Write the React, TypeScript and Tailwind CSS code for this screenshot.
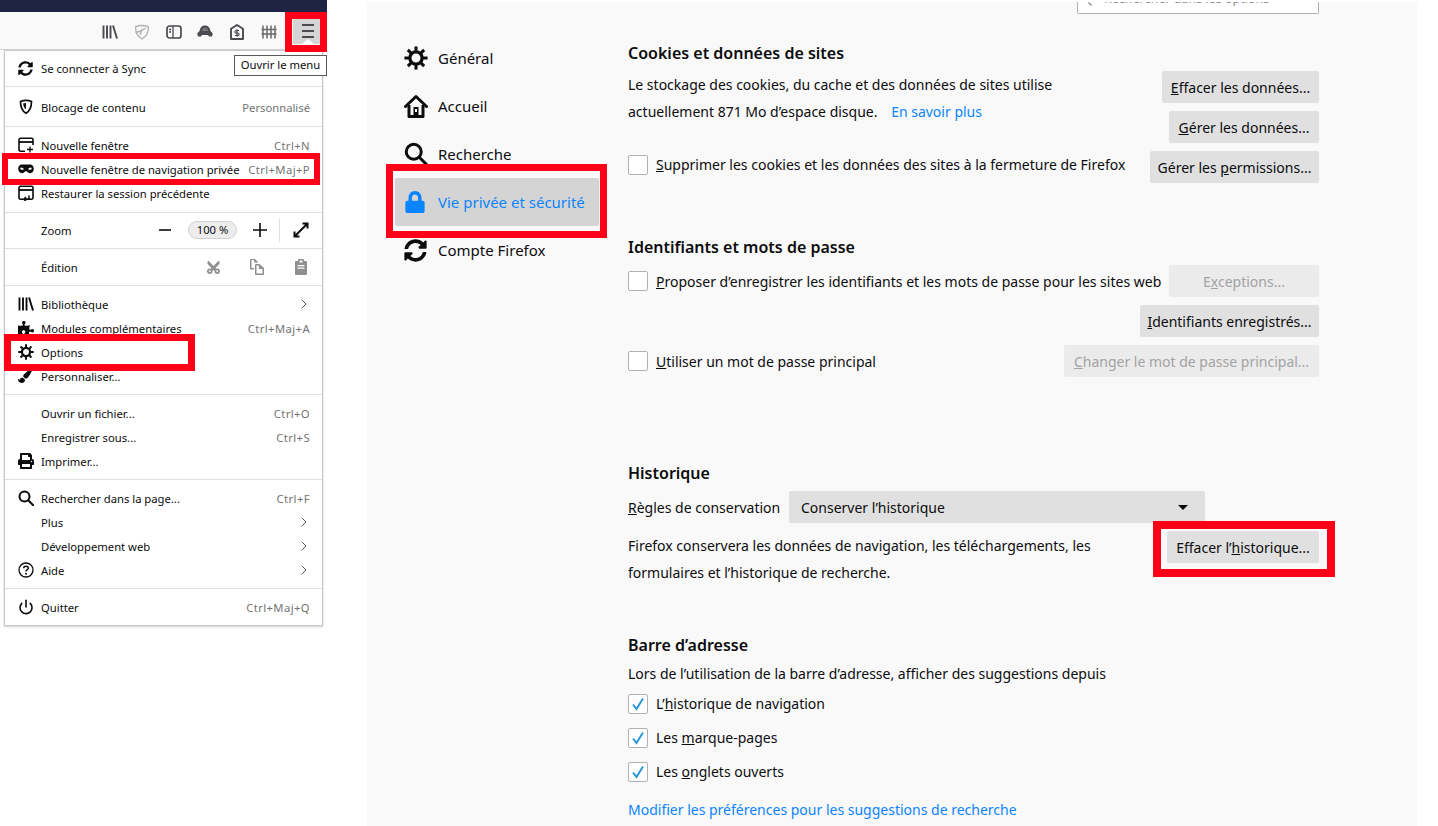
import type { ReactNode } from "react"
import { FaPrint, FaPuzzlePiece, FaSyncAlt, FaCut, FaPaintBrush, FaLock } from "react-icons/fa"
import { ChevronRight, Power } from "lucide-react"

function Gear({ size = 16 }: { size?: number }) {
  const angles = [0, 45, 90, 135, 180, 225, 270, 315]
  return (
    <svg width={size} height={size} viewBox="0 0 16 16">
      <circle cx="8" cy="8" r="4.100" fill="none" stroke="#0c0c0d" strokeWidth="2.200" />
      {angles.map((a) => (
        <rect key={a} x="7" y="0.300" width="2" height="3.600" fill="#0c0c0d" transform={`rotate(${a} 8 8)`} />
      ))}
    </svg>
  )
}

function SearchIcon({ size = 16 }: { size?: number }) {
  return (
    <svg width={size} height={size} viewBox="0 0 16 16" fill="none" stroke="#0c0c0d" strokeWidth="2">
      <circle cx="6.500" cy="6.500" r="5" />
      <path d="M10.200 10.200 15.200 15.200" strokeLinecap="round" />
    </svg>
  )
}

function Home() {
  return (
    <svg width="24" height="24" viewBox="0 0 24 24" fill="none" stroke="#0c0c0d" strokeWidth="3" strokeLinejoin="round">
      <path d="M1.500 12.500 12 2.500l10.500 10" strokeLinecap="round" />
      <path d="M5 11v11.500h14V11" />
      <rect x="9.500" y="13" width="5" height="9" fill="#0c0c0d" stroke="none" />
      <rect x="11" y="15" width="2" height="3" fill="#f9f9fa" stroke="none" />
    </svg>
  )
}

function Library({ color = "#0c0c0d" }: { color?: string }) {
  return (
    <svg width="16" height="16" viewBox="0 0 16 16" fill="none" stroke={color} strokeWidth="1.900">
      <path d="M1.500 1.500v13M5 1.500v13M8.500 1.500v13M11 1.500l4 13" />
    </svg>
  )
}

function Mask() {
  return (
    <svg width="16" height="16" viewBox="0 0 16 16">
      <path fillRule="evenodd" fill="#0c0c0d" d="M4 3.500h8c2.400 0 3.800 1.800 3.800 4.300 0 2.700-1.600 4.400-3.800 4.400-1.900 0-2.600-2-4-2s-2.100 2-4 2C1.800 12.200.2 10.500.2 7.800.2 5.300 1.600 3.500 4 3.500ZM3.200 6.500c-.9 0-1.200 1-.6 1.700.8.800 2.500.9 3 .2.500-.8-1-1.900-2.400-1.900Zm9.600 0c-1.400 0-2.900 1.100-2.400 1.900.5.700 2.200.6 3-.2.600-.7.300-1.700-.6-1.700Z" />
    </svg>
  )
}

function NewWindow() {
  return (
    <svg width="16" height="16" viewBox="0 0 16 16" fill="none" stroke="#0c0c0d" strokeWidth="1.600">
      <path d="M7 14.200H2.500a1.500 1.500 0 0 1-1.500-1.500V2.800a1.500 1.500 0 0 1 1.500-1.500h11a1.500 1.500 0 0 1 1.500 1.500V8" />
      <path d="M1 5h14" strokeWidth="1.800" />
      <path d="M12 9.500v6M9 12.500h6" strokeWidth="1.300" />
    </svg>
  )
}

function Restore() {
  return (
    <svg width="16" height="16" viewBox="0 0 16 16" fill="none" stroke="#0c0c0d" strokeWidth="1.600">
      <path d="M5 14.200H2.500a1.500 1.500 0 0 1-1.500-1.500V2.800a1.500 1.500 0 0 1 1.500-1.500h11a1.500 1.500 0 0 1 1.500 1.500v9.900a1.500 1.500 0 0 1-1.500 1.500H8" />
      <path d="M1 5h14" strokeWidth="1.800" />
      <path d="M11 10.500v3.700H6M8 12l-2.300 2.200L8 16.200" strokeWidth="1.500" />
    </svg>
  )
}

function ShieldMenu() {
  return (
    <svg width="16" height="16" viewBox="0 0 16 16">
      <path fill="none" stroke="#0c0c0d" strokeWidth="1.700" d="M8 1.300c1.900 0 3.800.4 5.500 1.200 0 5.500-1.200 9.300-5.500 11.800C3.700 11.800 2.500 8 2.500 2.500 4.200 1.700 6.100 1.300 8 1.300Z" />
      <path fill="#0c0c0d" d="M8 4c-1 0-2 .2-2.800.5.100 2.800.9 4.600 2.800 6Z" />
    </svg>
  )
}

function Help() {
  return (
    <svg width="16" height="16" viewBox="0 0 16 16" fill="none" stroke="#0c0c0d" strokeWidth="1.300">
      <circle cx="8" cy="8" r="7" />
      <path d="M5.700 6.200C5.800 4.900 6.800 4.200 8 4.200c1.300 0 2.300.8 2.300 1.900 0 1.800-2.300 1.800-2.300 3.500" strokeWidth="1.500" />
      <circle cx="8" cy="11.700" r="1" fill="#0c0c0d" stroke="none" />
    </svg>
  )
}

function Copy() {
  return (
    <svg width="16" height="16" viewBox="0 0 16 16" fill="#8f8f90">
      <path fillRule="evenodd" d="M2 0h4l2.500 2.500V4H7.500V3.500H5V1H2.500v8H5v1.500H2A1 1 0 0 1 1 9.500V1a1 1 0 0 1 1-1Z" />
      <path fillRule="evenodd" d="M7 5h3.500L15 9v6a1 1 0 0 1-1 1H7a1 1 0 0 1-1-1V6a1 1 0 0 1 1-1Zm.5 1.500v8h6V10H10V6.500Z" />
    </svg>
  )
}

function Paste() {
  return (
    <svg width="16" height="16" viewBox="0 0 16 16" fill="#8f8f90">
      <path fillRule="evenodd" d="M6 0h4a1 1 0 0 1 1 1v1h2a1 1 0 0 1 1 1v12a1 1 0 0 1-1 1H3a1 1 0 0 1-1-1V3a1 1 0 0 1 1-1h2V1a1 1 0 0 1 1-1Zm.5 1.500V3.500h3V1.500ZM4.500 6v1.200h7V6Zm0 2.500v1.200h7V8.500Z" />
    </svg>
  )
}

function Expand() {
  return (
    <svg width="16" height="16" viewBox="0 0 16 16" fill="none" stroke="#0c0c0d" strokeWidth="2">
      <path d="M9.500 1.500h5v5M14 2 2 14M1.500 9.500v5h5" />
    </svg>
  )
}

function ToolbarIcons() {
  return (
    <>
      <Library color="#4a4a4f" />
      <svg width="16" height="16" viewBox="0 0 16 16" fill="none" stroke="#b1b1b3" strokeWidth="1.300">
        <path d="M8 1.500c2 0 4.500.4 6.500 1.300C14.500 8.500 13 12.500 8 15 3 12.500 1.500 8.500 1.500 2.800 3.500 1.900 6 1.500 8 1.500Z" />
        <path d="M1.500 8.500C5 8 8 7 12 4M6 11c.8-2 1.500-4 2-6" />
      </svg>
      <svg width="16" height="16" viewBox="0 0 16 16" fill="none" stroke="#4a4a4f" strokeWidth="1.700">
        <rect x="1" y="2" width="14" height="12" rx="2.500" />
        <path d="M7 2v12M3 5.500h2M3 8h2" strokeWidth="1.300" />
      </svg>
      <svg width="16" height="16" viewBox="0 0 16 16" fill="#4a4a4f">
        <path d="M8 1.500c3 0 5 2 5.500 5.500l2.300 2.500-.8 3h-3l-1-1.500H5l-1 1.500H1l-.8-3L2.500 7C3 3.500 5 1.500 8 1.500Z" />
        <path d="M8 3.500c-1.700 0-3 1.200-3.400 3.500h6.800C11 4.700 9.700 3.500 8 3.500Z" fill="#f9f9fa" fillOpacity="0.25" />
      </svg>
      <svg width="16" height="16" viewBox="0 0 16 16" fill="none" stroke="#4a4a4f" strokeWidth="1.900">
        <path d="M8 1 14 4.800V15H2V4.800Z" strokeLinejoin="round" />
        <path d="M10 6.500H7.200a1.200 1.200 0 0 0 0 2.500h1.600a1.200 1.200 0 0 1 0 2.500H6M8 5.200v7.600" strokeWidth="1.200" />
      </svg>
      <svg width="16" height="16" viewBox="0 0 16 16" fill="none" stroke="#6a6a6e" strokeWidth="1.500">
        <path d="M2 1.500v13M6 1.500v13M10 1.500v13M14 1.500v13M.5 5.500h15M.5 10h15" />
      </svg>
    </>
  )
}

function Row({
  icon,
  label,
  hint,
  arrow,
}: {
  icon?: ReactNode
  label: string
  hint?: string
  arrow?: boolean
}) {
  return (
    <div className="flex h-6 items-center whitespace-nowrap pl-[13px] pr-[12px]">
      <span className="flex w-[23px] shrink-0 items-center">{icon}</span>
      <span className="pt-[2px] text-[#0c0c0d]">{label}</span>
      {hint && (
        <span className={`ml-auto pt-[2px] text-[#737373] ${hint.startsWith("Ctrl") ? "tracking-[0.4px]" : ""}`}>{hint}</span>
      )}
      {arrow && <ChevronRight size={16} strokeWidth={1.500} className="-mr-[2px] ml-auto text-[#5a5a5e]" />}
    </div>
  )
}

function Section({ children, className = "py-[6px]" }: { children: ReactNode; className?: string }) {
  return <div className={`border-b border-[#e0e0e1] last:border-b-0 ${className}`}>{children}</div>
}

function Menu() {
  return (
    <div className="ml-[4px] w-[319px] border border-[#c8c8c8] bg-white text-[11.25px] shadow-[0_1px_2px_rgba(0,0,0,0.2)]">
      <Section className="pb-[6px] pt-[5px]">
        <Row icon={<FaSyncAlt size={15} color="#0c0c0d" />} label="Se connecter à Sync" />
      </Section>
      <Section className="pb-[7px] pt-[8px]">
        <Row icon={<ShieldMenu />} label="Blocage de contenu" hint="Personnalisé" />
      </Section>
      <Section className="pb-[7px] pt-[6px]">
        <Row icon={<NewWindow />} label="Nouvelle fenêtre" hint="Ctrl+N" />
        <Row icon={<Mask />} label="Nouvelle fenêtre de navigation privée" hint="Ctrl+Maj+P" />
        <Row icon={<Restore />} label="Restaurer la session précédente" />
      </Section>
      <Section className="pb-[6px] pt-[5px]">
        <div className="flex h-6 items-center pl-[13px] pr-[13px]">
          <span className="w-[23px]" />
          <span className="pt-[2px] text-[#0c0c0d]">Zoom</span>
          <div className="ml-auto flex items-center">
            <svg width="14" height="14" viewBox="0 0 14 14" stroke="#0c0c0d" strokeWidth="1.600">
              <path d="M1 7h12" />
            </svg>
            <span className="ml-[16px] flex h-[18px] w-[49px] items-center justify-center rounded-full border border-[#d0d0d0] bg-[#ededed] text-[#0c0c0d]">
              100 %
            </span>
            <svg className="ml-[16px]" width="14" height="14" viewBox="0 0 14 14" stroke="#0c0c0d" strokeWidth="1.600">
              <path d="M0 7h14M7 0v14" />
            </svg>
            <span className="ml-[12px] h-6 w-px bg-[#e0e0e1]" />
            <span className="ml-[13px]">
              <Expand />
            </span>
          </div>
        </div>
      </Section>
      <Section>
        <div className="flex h-6 items-center pl-[13px] pr-[13px]">
          <span className="w-[23px]" />
          <span className="pt-[2px] text-[#0c0c0d]">Édition</span>
          <div className="ml-auto flex items-center gap-[28px]">
            <FaCut size={15} color="#8f8f90" className="-rotate-90" />
            <Copy />
            <Paste />
          </div>
        </div>
      </Section>
      <Section>
        <Row icon={<Library />} label="Bibliothèque" arrow />
        <Row icon={<FaPuzzlePiece size={16} color="#0c0c0d" />} label="Modules complémentaires" hint="Ctrl+Maj+A" />
        <Row icon={<Gear />} label="Options" />
        <Row icon={<FaPaintBrush size={14} color="#0c0c0d" />} label="Personnaliser..." />
      </Section>
      <Section>
        <Row label="Ouvrir un fichier..." hint="Ctrl+O" />
        <Row label="Enregistrer sous..." hint="Ctrl+S" />
        <Row icon={<FaPrint size={16} color="#0c0c0d" />} label="Imprimer..." />
      </Section>
      <Section>
        <Row icon={<SearchIcon />} label="Rechercher dans la page..." hint="Ctrl+F" />
        <Row label="Plus" arrow />
        <Row label="Développement web" arrow />
        <Row icon={<Help />} label="Aide" arrow />
      </Section>
      <Section>
        <Row icon={<Power size={16} strokeWidth={2.400} color="#0c0c0d" />} label="Quitter" hint="Ctrl+Maj+Q" />
      </Section>
    </div>
  )
}

function Nav({ icon, label, active }: { icon: ReactNode; label: string; active?: boolean }) {
  return (
    <div
      className={`mx-px flex h-12 items-center rounded-[2px] pl-[9px] text-[15px] ${
        active ? "bg-[#d4d4d4] text-[#0a84ff]" : "text-[#0c0c0d]"
      }`}
    >
      <span className="flex w-[34px] shrink-0 items-center">{icon}</span>
      <span>{label}</span>
    </div>
  )
}

function Btn({ children, className = "", disabled }: { children: ReactNode; className?: string; disabled?: boolean }) {
  return (
    <div
      className={`flex h-8 shrink-0 items-center justify-center rounded-[2px] ${
        disabled ? "bg-[#ebebeb] text-[#a3a3a4]" : "bg-[#e0e0e1] text-[#0c0c0d]"
      } ${className}`}
    >
      <span>{children}</span>
    </div>
  )
}

function Check({ checked, children }: { checked?: boolean; children: ReactNode }) {
  return (
    <div className="flex items-center whitespace-nowrap">
      <span className="flex h-5 w-5 shrink-0 items-center justify-center rounded-[2px] border border-[#b1b1b3] bg-white">
        {checked && (
          <svg width="14" height="14" viewBox="0 0 14 14" fill="none" stroke="#2a96d8" strokeWidth="2">
            <path d="M2 7.500 5.500 12 12 1.500" />
          </svg>
        )}
      </span>
      <span className="ml-2">{children}</span>
    </div>
  )
}

function Heading({ children }: { children: ReactNode }) {
  return <h2 className="text-[16px] font-semibold leading-6 text-[#0c0c0d]">{children}</h2>
}

function Settings() {
  return (
    <main className="flex h-[824px] w-[1050px] overflow-hidden bg-[#f9f9fa] text-[14px] text-[#0c0c0d]">
      <nav className="ml-[27px] mt-[32px] w-[206px] shrink-0">
        <Nav icon={<Gear size={24} />} label="Général" />
        <Nav icon={<Home />} label="Accueil" />
        <Nav icon={<SearchIcon size={24} />} label="Recherche" />
        <Nav icon={<FaLock size={22} color="#0a84ff" />} label="Vie privée et sécurité" active />
        <Nav icon={<FaSyncAlt size={23} color="#0c0c0d" />} label="Compte Firefox" />
      </nav>
      <div className="ml-[28px] w-[691px] shrink-0">
        <div className="ml-auto flex h-[12px] w-[242px] items-end overflow-hidden rounded-b-[2px] border border-t-0 border-[#b1b1b3] bg-white pl-[10px] text-[12.5px] leading-[14px] text-[#8a8a8c]">
          <svg className="mb-[7px] shrink-0" width="16" height="4" viewBox="0 0 16 4" stroke="#8a8a8c" strokeWidth="1.300" fill="none">
            <path d="M3.500 3.500 0.500 0.500" />
          </svg>
          <span className="mb-[7px] whitespace-nowrap">Rechercher dans les options</span>
        </div>

        <section className="mt-[27px]">
          <Heading>Cookies et données de sites</Heading>
          <div className="mt-[6px] flex justify-between">
            <div className="leading-[27px]">
              <p>Le stockage des cookies, du cache et des données de sites utilise</p>
              <p>
                actuellement 871 Mo d’espace disque. <span className="ml-[10px] text-[#0a84ff]">En savoir plus</span>
              </p>
            </div>
            <div className="flex flex-col items-end gap-2">
              <Btn className="w-[157px]">
                <u>E</u>ffacer les données...
              </Btn>
              <Btn className="w-[150px]">
                <u>G</u>érer les données...
              </Btn>
            </div>
          </div>
          <div className="mt-2 flex items-start justify-between">
            <div className="mt-[3px]">
              <Check>
                <u>S</u>upprimer les cookies et les données des sites à la fermeture de Firefox
              </Check>
            </div>
            <Btn className="w-[169px]">
              Gérer les <u>p</u>ermissions...
            </Btn>
          </div>
        </section>

        <section className="mt-[52px]">
          <Heading>Identifiants et mots de passe</Heading>
          <div className="mt-[6px] flex items-center justify-between">
            <Check>
              <u>P</u>roposer d’enregistrer les identifiants et les mots de passe pour les sites web
            </Check>
            <Btn disabled className="w-[150px]">
              E<u>x</u>ceptions...
            </Btn>
          </div>
          <div className="mt-2 flex justify-end">
            <Btn className="w-[179px]">
              <u>I</u>dentifiants enregistrés...
            </Btn>
          </div>
          <div className="mt-2 flex items-center justify-between">
            <Check>
              <u>U</u>tiliser un mot de passe principal
            </Check>
            <Btn disabled className="w-[255px]">
              <u>C</u>hanger le mot de passe principal...
            </Btn>
          </div>
        </section>

        <section className="mt-[84px]">
          <Heading>Historique</Heading>
          <div className="mt-[6px] flex items-center">
            <span className="w-[161px] shrink-0">
              <u>R</u>ègles de conservation
            </span>
            <div className="flex h-8 w-[416px] items-center justify-between rounded-[2px] bg-[#e0e0e1] pl-3 pr-[17px]">
              <span>Conserver l’historique</span>
              <span className="h-0 w-0 border-x-[5px] border-t-[5px] border-x-transparent border-t-[#0c0c0d]" />
            </div>
          </div>
          <div className="mt-2 flex justify-between">
            <div className="pt-[1px] leading-[27px]">
              <p>Firefox conservera les données de navigation, les téléchargements, les</p>
              <p>formulaires et l’historique de recherche.</p>
            </div>
            <Btn className="w-[152px]">
              Effacer l’<u>h</u>istorique...
            </Btn>
          </div>
        </section>

        <section className="mt-[47px]">
          <Heading>Barre d’adresse</Heading>
          <p className="mt-[3px] leading-[27px]">Lors de l’utilisation de la barre d’adresse, afficher des suggestions depuis</p>
          <div className="mt-[6px] flex flex-col gap-[13px]">
            <Check checked>
              L’<u>h</u>istorique de navigation
            </Check>
            <Check checked>
              Les <u>m</u>arque-pages
            </Check>
            <Check checked>
              Les <u>o</u>nglets ouverts
            </Check>
          </div>
          <p className="mt-[17px] text-[#0a84ff]">Modifier les préférences pour les suggestions de recherche</p>
        </section>
      </div>
    </main>
  )
}

function Mark({ className }: { className: string }) {
  return <div className={`pointer-events-none absolute border-[#ff0019] ${className}`} />
}

export default function App() {
  return (
    <div className="relative flex h-[826px] w-[1438px] overflow-hidden bg-white font-['Noto_Sans',sans-serif]">
      <aside className="w-[327px] shrink-0">
        <div className="h-3 bg-[#1f2444]" />
        <div className="flex h-[38px] items-center border-b border-[#d4d4d5] bg-[#f9f9fa] pl-[102px]">
          <div className="flex w-[175px] items-center justify-between pt-[2px]">
            <ToolbarIcons />
          </div>
          <div className="relative ml-[16px] mt-[1px] flex h-[26px] w-[27px] items-center justify-center bg-[#d5d5d6]">
            <svg className="translate-x-[1px]" width="12" height="14" viewBox="0 0 12 14" stroke="#4a4a4f" strokeWidth="2">
              <path d="M0 1h12M0 7h12M0 13h12" />
            </svg>
            <span className="absolute bottom-0 left-[9px] h-0 w-0 border-x-[6px] border-b-[5px] border-x-transparent border-b-white" />
          </div>
        </div>
        <Menu />
      </aside>
      <div className="ml-[40px] mt-[2px]">
        <Settings />
      </div>

      {/* tooltip and the red annotation boxes sit over the page */}
      <div className="absolute left-[234px] top-[55px] flex h-[21px] w-[93px] items-center justify-center border border-[#5a5a5a] bg-white text-[11.25px] text-[#0c0c0d]">
        Ouvrir le menu
      </div>
      <Mark className="left-[285px] top-[12px] h-[40px] w-[42px] border-[7px]" />
      <Mark className="left-[2px] top-[153px] h-[32px] w-[318px] border-[6px]" />
      <Mark className="left-[4px] top-[334px] h-[37px] w-[191px] border-[7px]" />
      <Mark className="left-[386px] top-[164px] h-[74px] w-[221px] border-[7px]" />
      <Mark className="left-[1153px] top-[521px] h-[56px] w-[182px] border-[8px]" />
    </div>
  )
}
